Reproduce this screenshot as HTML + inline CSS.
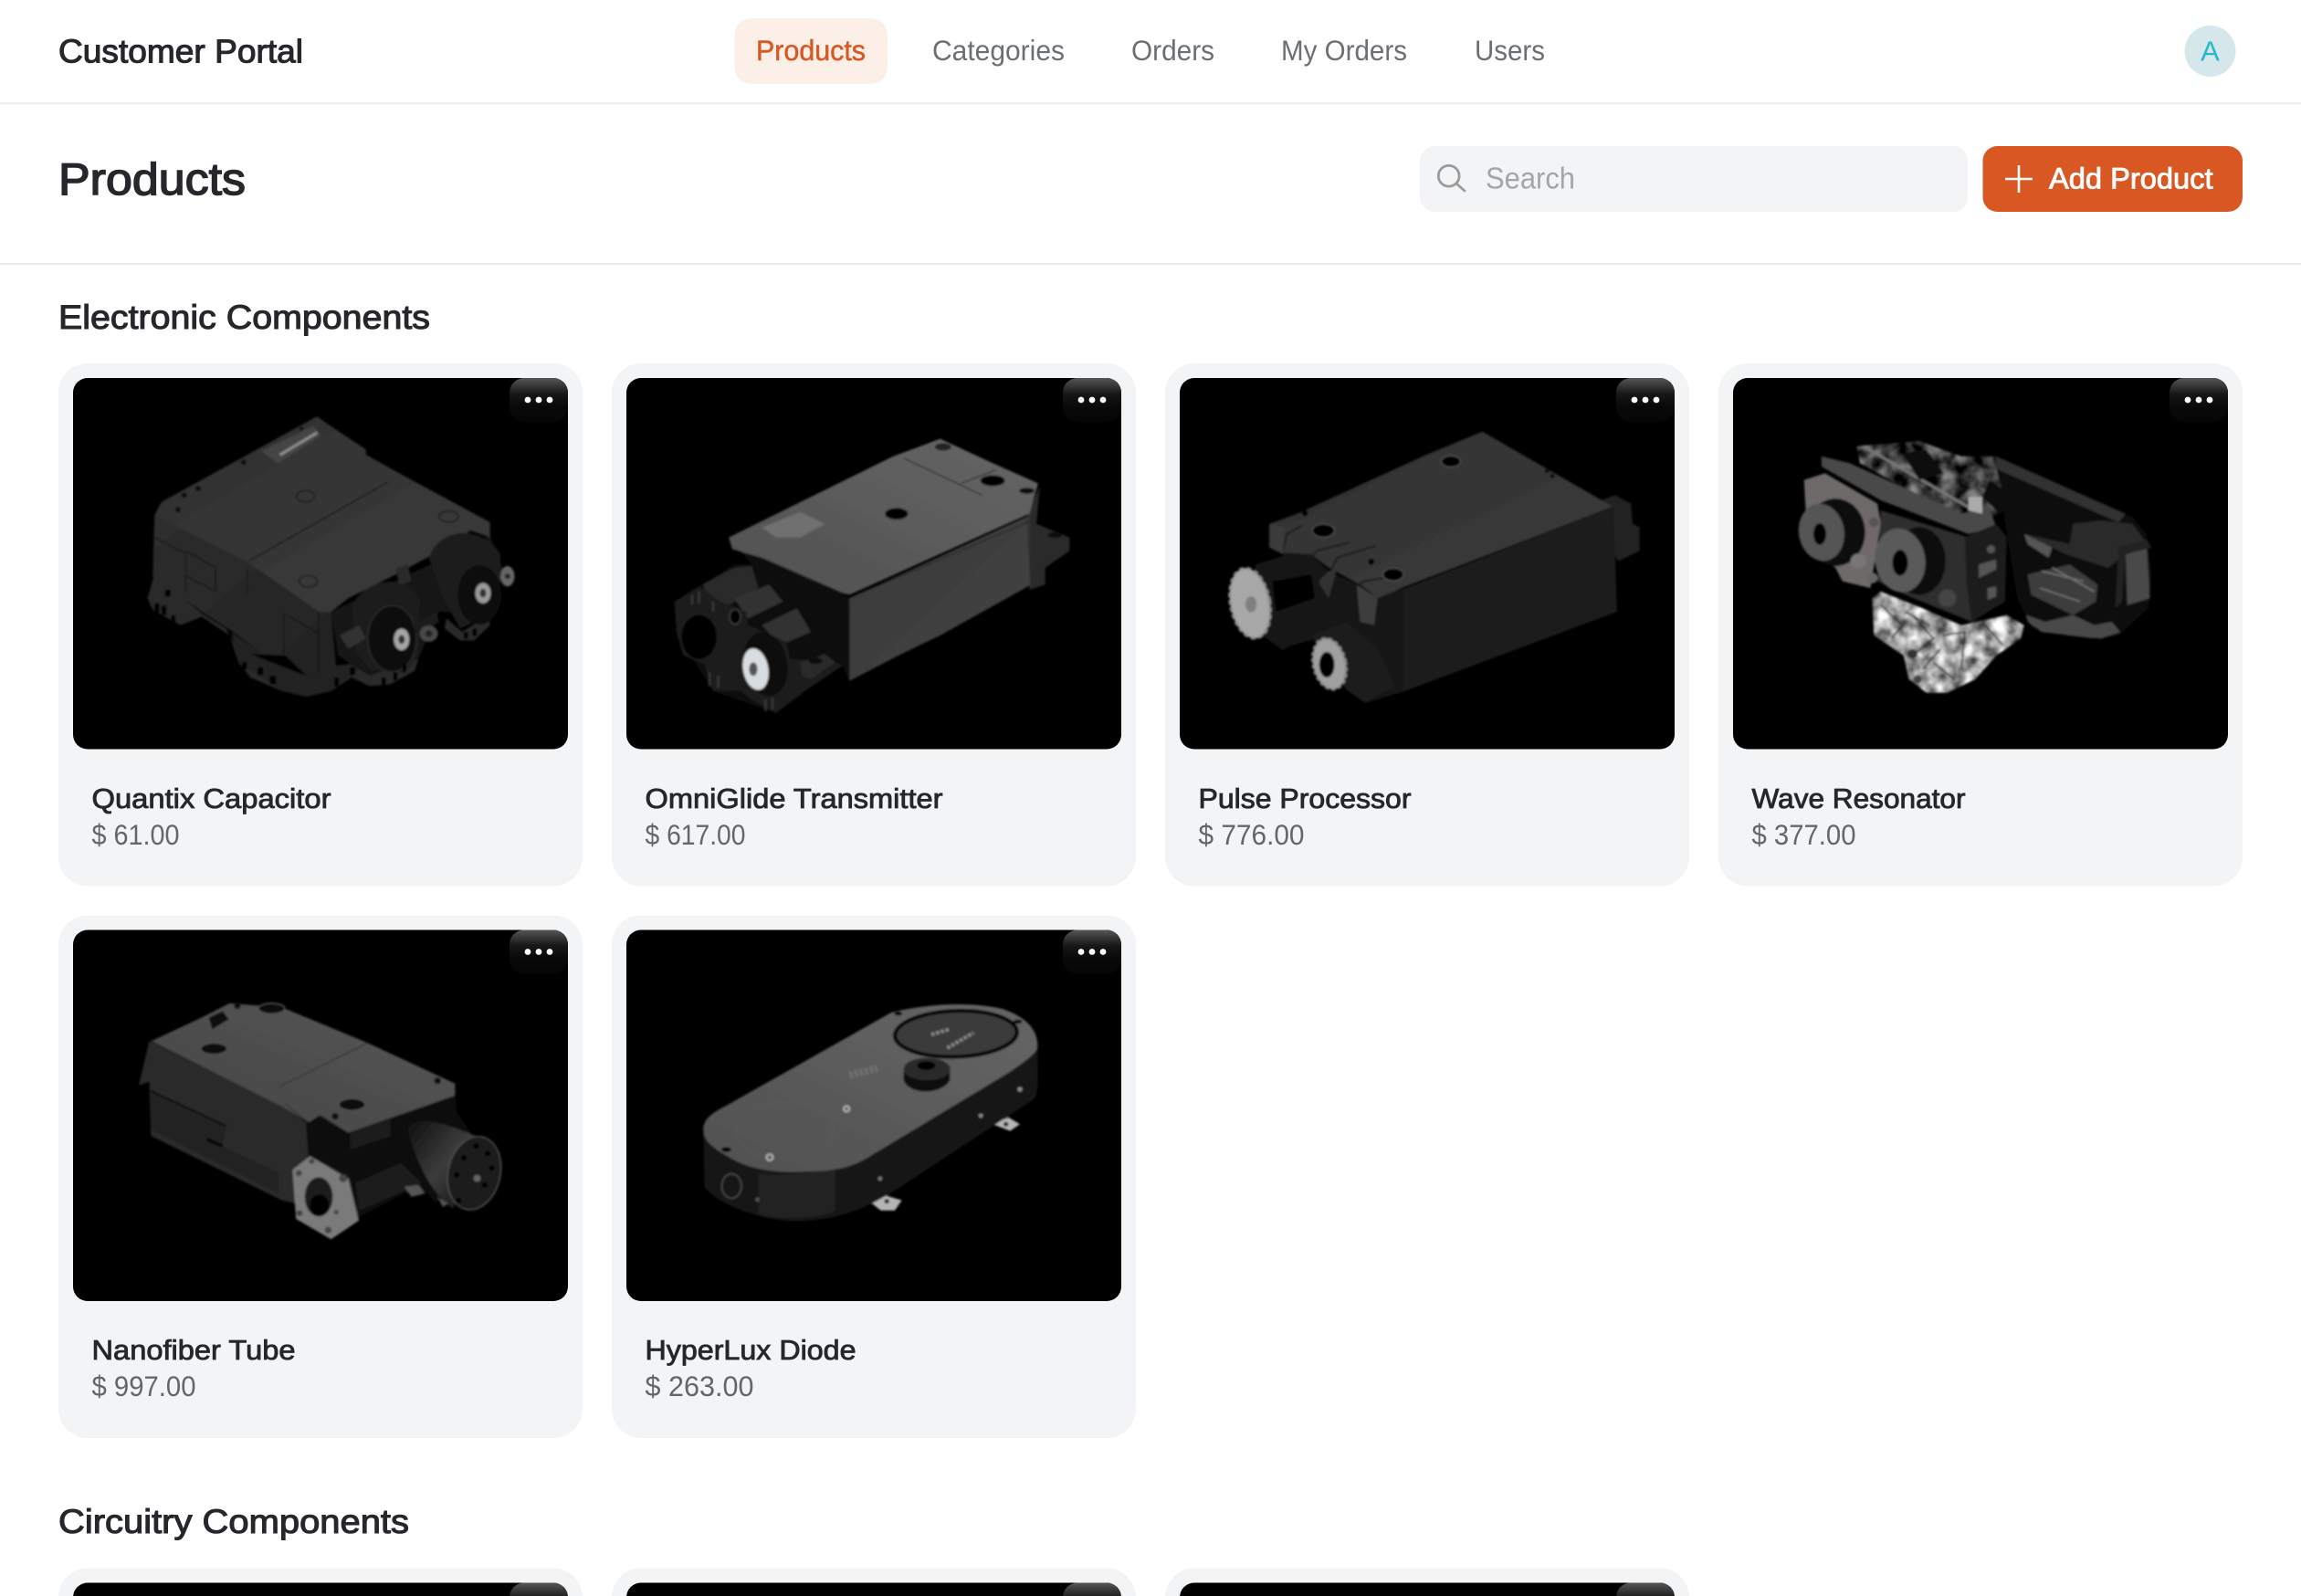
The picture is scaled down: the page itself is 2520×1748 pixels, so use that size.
<!DOCTYPE html>
<html lang="en"><head><meta charset="utf-8"><title>Customer Portal - Products</title>
<style>
html,body{margin:0;padding:0;background:#fff;width:2520px;height:1748px;overflow:hidden}
svg{display:block}
text{font-family:"Liberation Sans",Arial,sans-serif}
.n{font-size:30.5px;fill:#25272b;stroke:#25272b;stroke-width:.85px}
.p{font-size:31.5px;fill:#63676c}
.nav{font-size:31.5px;fill:#6b6f73}
.h2{font-size:37px;fill:#25272b;stroke:#25272b;stroke-width:1.1px}
</style></head><body>
<svg xmlns="http://www.w3.org/2000/svg" width="2520" height="1748" viewBox="0 0 2520 1748">
<defs>
<linearGradient id="top1" x1="0" y1="0" x2="1" y2="1"><stop offset="0" stop-color="#303030"/><stop offset="1" stop-color="#3c3c3c"/></linearGradient>
<linearGradient id="top2" x1="0" y1="1" x2="1" y2="0"><stop offset="0" stop-color="#505050"/><stop offset="1" stop-color="#666"/></linearGradient>
<linearGradient id="side" x1="0" y1="0" x2="1" y2="1"><stop offset="0" stop-color="#2e2e2e"/><stop offset="1" stop-color="#222"/></linearGradient>
<linearGradient id="side2" x1="0" y1="0" x2="1" y2="1"><stop offset="0" stop-color="#383838"/><stop offset="1" stop-color="#454545"/></linearGradient>
<linearGradient id="dotbg" x1="0" y1="0" x2="0" y2="1"><stop offset="0" stop-color="#565656"/><stop offset=".36" stop-color="#171717"/><stop offset=".65" stop-color="#090909"/><stop offset="1" stop-color="#060606"/></linearGradient>
<linearGradient id="cyl" x1="0" y1="0" x2="1" y2="1"><stop offset="0" stop-color="#0f0f0f"/><stop offset=".5" stop-color="#3c3c3c"/><stop offset="1" stop-color="#0a0a0a"/></linearGradient>
<filter id="b" x="-5%" y="-5%" width="110%" height="110%"><feGaussianBlur stdDeviation="2.6"/></filter>
<filter id="metal" x="0" y="0" width="100%" height="100%" color-interpolation-filters="sRGB"><feTurbulence type="fractalNoise" baseFrequency="0.024" numOctaves="3" seed="4"/><feColorMatrix values="1.5 0 0 0 -0.12 1.5 0 0 0 -0.12 1.5 0 0 0 -0.12 0 0 0 0 1"/><feComposite in2="SourceAlpha" operator="in"/></filter>
<filter id="mech" x="0" y="0" width="100%" height="100%" color-interpolation-filters="sRGB"><feTurbulence type="fractalNoise" baseFrequency="0.022" numOctaves="3" seed="9"/><feColorMatrix values="1.1 0 0 0 -0.3 1.1 0 0 0 -0.3 1.1 0 0 0 -0.3 0 0 0 0 1"/><feComposite in2="SourceAlpha" operator="in"/></filter>
<clipPath id="c1"><rect x="80" y="414" width="542" height="406.5" rx="16"/></clipPath>
<clipPath id="c2"><rect x="686" y="414" width="542" height="406.5" rx="16"/></clipPath>
<clipPath id="c3"><rect x="1292" y="414" width="542" height="406.5" rx="16"/></clipPath>
<clipPath id="c4"><rect x="1898" y="414" width="542" height="406.5" rx="16"/></clipPath>
<clipPath id="c5"><rect x="80" y="1018.5" width="542" height="406.5" rx="16"/></clipPath>
<clipPath id="c6"><rect x="686" y="1018.5" width="542" height="406.5" rx="16"/></clipPath>
</defs>
<rect width="2520" height="1748" fill="#fff"/>

<!-- nav -->
<rect x="0" y="112" width="2520" height="2" fill="#eceef0"/>
<rect x="0" y="114" width="2520" height="1" fill="#f7f8f9"/>
<text x="64" y="68.5" font-size="36.5" fill="#25272b" stroke="#25272b" stroke-width="1.1" textLength="268" lengthAdjust="spacingAndGlyphs">Customer Portal</text>
<rect x="804.5" y="20" width="167.5" height="72" rx="18" fill="#fbefe8"/>
<text x="828" y="66" class="nav" style="fill:#d95723;stroke:#d95723;stroke-width:.5px" textLength="120" lengthAdjust="spacingAndGlyphs">Products</text>
<text x="1021" y="66" class="nav" textLength="145" lengthAdjust="spacingAndGlyphs">Categories</text>
<text x="1239" y="66" class="nav" textLength="91" lengthAdjust="spacingAndGlyphs">Orders</text>
<text x="1403" y="66" class="nav" textLength="138" lengthAdjust="spacingAndGlyphs">My Orders</text>
<text x="1615" y="66" class="nav" textLength="77" lengthAdjust="spacingAndGlyphs">Users</text>
<circle cx="2420.5" cy="56" r="28" fill="#d5e7eb"/>
<text x="2420.5" y="66.5" font-size="31" fill="#22b8cf" text-anchor="middle">A</text>

<!-- page header -->
<rect x="0" y="288" width="2520" height="2" fill="#e9eaec"/>
<text x="64" y="213" font-size="49" fill="#25272b" stroke="#25272b" stroke-width="1.5" textLength="205" lengthAdjust="spacingAndGlyphs">Products</text>
<rect x="1555" y="160" width="600" height="72" rx="16" fill="#f3f4f6"/>
<circle cx="1586.7" cy="192.7" r="11.4" fill="none" stroke="#9b9b9b" stroke-width="2.8"/>
<path d="M1595 201 L1604 209" stroke="#9b9b9b" stroke-width="2.8" stroke-linecap="round"/>
<text x="1627" y="206.5" font-size="33" fill="#a3a6a9" textLength="98" lengthAdjust="spacingAndGlyphs">Search</text>
<rect x="2171.5" y="160" width="284.5" height="72" rx="16" fill="#d95723"/>
<path d="M2196 196 H2226 M2211 181 V211" stroke="#fff" stroke-width="2.6" fill="none"/>
<text x="2244" y="206.5" font-size="32" fill="#fff" stroke="#fff" stroke-width=".85" textLength="179.5" lengthAdjust="spacingAndGlyphs">Add Product</text>

<text x="64" y="360" class="h2" textLength="407" lengthAdjust="spacingAndGlyphs">Electronic Components</text>
<text x="64" y="1679" class="h2" textLength="384" lengthAdjust="spacingAndGlyphs">Circuitry Components</text>

<!-- cards row 1 -->
<rect x="64" y="398" width="574" height="572.5" rx="32" fill="#f3f4f6"/>
<rect x="670" y="398" width="574" height="572.5" rx="32" fill="#f3f4f6"/>
<rect x="1276" y="398" width="574" height="572.5" rx="32" fill="#f3f4f6"/>
<rect x="1882" y="398" width="574" height="572.5" rx="32" fill="#f3f4f6"/>
<!-- cards row 2 -->
<rect x="64" y="1002.5" width="574" height="572.5" rx="32" fill="#f3f4f6"/>
<rect x="670" y="1002.5" width="574" height="572.5" rx="32" fill="#f3f4f6"/>
<!-- cards row 3 -->
<rect x="64" y="1717.5" width="574" height="80" rx="32" fill="#f3f4f6"/>
<rect x="670" y="1717.5" width="574" height="80" rx="32" fill="#f3f4f6"/>
<rect x="1276" y="1717.5" width="574" height="80" rx="32" fill="#f3f4f6"/>
<rect x="80" y="1733.5" width="542" height="60" rx="16" fill="#000"/>
<rect x="686" y="1733.5" width="542" height="60" rx="16" fill="#000"/>
<rect x="1292" y="1733.5" width="542" height="60" rx="16" fill="#000"/>
<rect x="558" y="1733.5" width="64" height="48" rx="16" fill="url(#dotbg)"/>
<rect x="1164" y="1733.5" width="64" height="48" rx="16" fill="url(#dotbg)"/>
<rect x="1770" y="1733.5" width="64" height="48" rx="16" fill="url(#dotbg)"/>

<!-- image 1 -->
<g clip-path="url(#c1)"><rect x="80" y="414" width="542" height="407" fill="#000"/>
<svg x="80" y="414" width="542" height="406.5" viewBox="52 38 1416 1099" preserveAspectRatio="none"><g filter="url(#b)">
<path d="M265 690 L285 620 L420 735 L490 780 L530 860 L640 920 L720 950 L830 905 L870 880 L905 905 L1010 850 L1040 870 L1030 905 L960 945 L900 950 L850 925 L790 965 L720 982 L650 965 L560 925 L525 880 L500 800 L420 745 L360 770 L280 725 Z" fill="#2c2c2c"/>
<path d="M505 790 L525 880 L650 965 L720 982 L790 965 L850 925 L880 880 L800 890 L755 920 L600 860 Z" fill="#232323"/>
<path d="M1120 750 L1165 790 L1240 740 L1245 770 L1200 815 L1160 815 L1115 780 Z" fill="#2c2c2c"/>
<path d="M790 730 L1245 505 L1280 600 L1240 740 L1100 730 L1040 870 L900 920 L810 860 Z" fill="#131313"/>
<path d="M285 445 L555 585 L755 730 L790 730 L805 895 L755 920 L600 860 L510 790 L480 770 L420 730 L280 625 Z" fill="url(#side)"/>
<path d="M305 405 L750 152 L775 170 L890 250 L890 265 L985 320 L1245 465 L1245 510 L1190 490 L1065 570 L975 620 L840 690 L790 730 L755 730 L555 585 L285 445 Z" fill="url(#top1)"/>
<path d="M590 255 L740 180 L760 210 L640 290 Z" fill="#454545"/>
<path d="M645 265 L750 200" stroke="#aaa" stroke-width="8" stroke-dasharray="5 3"/>
<path d="M555 580 L955 345 M550 600 V680 M375 550 V670 M375 550 L460 600 V670 L375 625 M285 510 L370 555 M655 735 V860 M655 735 L755 795 M755 730 V910" stroke="#111" stroke-width="3" fill="none"/>
<circle cx="540" cy="287" r="8" fill="#111"/><circle cx="410" cy="365" r="8" fill="#111"/><circle cx="370" cy="385" r="8" fill="#111"/><circle cx="352" cy="428" r="8" fill="#111"/><circle cx="705" cy="188" r="6" fill="#111"/>
<ellipse cx="718" cy="388" rx="26" ry="17" fill="none" stroke="#1a1a1a" stroke-width="4"/><ellipse cx="1127" cy="448" rx="28" ry="16" fill="none" stroke="#1a1a1a" stroke-width="4"/><ellipse cx="725" cy="640" rx="26" ry="17" fill="none" stroke="#1a1a1a" stroke-width="4"/>
<path d="M1070 570 C1100 480 1220 470 1275 560 L1275 640 L1240 740 L1160 780 L1110 690 Z" fill="#1a1a1a"/>
<ellipse cx="1215" cy="680" rx="62" ry="88" fill="#0d0d0d"/><ellipse cx="1225" cy="675" rx="22" ry="30" fill="#9a9a9a"/><ellipse cx="1225" cy="675" rx="9" ry="13" fill="#333"/>
<ellipse cx="1295" cy="625" rx="20" ry="30" fill="#666"/><circle cx="1295" cy="625" r="8" fill="#222"/>
<path d="M850 710 C900 620 1020 620 1045 700 L1040 860 L1000 910 L905 905 L860 850 Z" fill="#1a1a1a"/>
<ellipse cx="965" cy="810" rx="70" ry="98" fill="#0a0a0a" stroke="#262626" stroke-width="6"/><ellipse cx="992" cy="812" rx="22" ry="32" fill="#a5a5a5"/><ellipse cx="992" cy="812" rx="9" ry="13" fill="#333"/>
<path d="M1020 770 L1090 730 L1100 760 L1040 800 Z" fill="#1a1a1a"/><ellipse cx="1070" cy="795" rx="26" ry="24" fill="#4a4a4a"/><circle cx="1070" cy="795" r="10" fill="#222"/>
<path d="M975 600 L1010 590 L1020 640 L985 650 Z" fill="#2a2a2a"/><path d="M815 800 L870 770 L890 810 L840 840 Z" fill="#333"/>
<g fill="#000"><rect x="285" y="705" width="14" height="28"/><rect x="305" y="712" width="14" height="28"/><rect x="333" y="740" width="12" height="24"/><rect x="315" y="665" width="16" height="20"/><rect x="535" y="880" width="14" height="22"/><rect x="580" y="895" width="16" height="22"/><rect x="615" y="920" width="18" height="25"/><rect x="800" y="925" width="12" height="26"/><rect x="845" y="895" width="14" height="22"/><rect x="935" y="925" width="12" height="22"/><rect x="968" y="910" width="12" height="24"/><rect x="995" y="885" width="10" height="24"/><rect x="1170" y="790" width="12" height="20"/><rect x="1195" y="780" width="12" height="22"/><path d="M560 855 L660 860 L720 920 L620 880 Z"/></g>
</g></svg></g>

<!-- image 2 -->
<g clip-path="url(#c2)"><rect x="686" y="414" width="542" height="407" fill="#000"/>
<svg x="686" y="414" width="542" height="406.5" viewBox="42 38 1416 1099" preserveAspectRatio="none"><g filter="url(#b)">
<path d="M1190 440 L1225 360 L1215 470 L1310 510 L1310 550 L1240 600 L1240 650 L1195 665 Z" fill="#2a2a2a"/>
<path d="M350 590 L400 590 L335 510 L430 570 L680 690 L680 935 L660 890 L560 960 L470 1030 L290 965 L185 790 L180 700 L250 655 Z" fill="#0f0f0f"/>
<path d="M680 690 L1195 445 L1200 650 L1010 760 L940 800 L820 860 L680 935 Z" fill="url(#side2)"/>
<path d="M335 510 L805 270 L940 218 L1090 290 L1220 350 L1195 440 L680 680 L660 675 L430 570 L345 545 Z" fill="url(#top2)"/>
<path d="M835 275 L1060 385 M1000 350 L1100 310 M680 690 V930 M1190 450 L1200 650 M700 680 L1190 465" stroke="#222" stroke-width="3" fill="none"/>
<ellipse cx="815" cy="440" rx="33" ry="17" fill="#000"/><ellipse cx="1090" cy="342" rx="35" ry="16" fill="#000"/><ellipse cx="948" cy="242" rx="24" ry="11" fill="#222"/><ellipse cx="1188" cy="372" rx="22" ry="9" fill="#111"/><ellipse cx="1268" cy="503" rx="20" ry="9" fill="#111"/>
<path d="M430 480 L540 435 L610 470 L540 510 L470 510 Z" fill="#7a7a7a" opacity=".7"/>
<path d="M260 650 L350 600 L400 595 L420 660 L300 730 Z" fill="#2a2a2a"/>
<path d="M350 690 L450 650 L490 700 L390 750 Z" fill="#333"/><path d="M430 770 L530 720 L570 790 L480 830 Z" fill="#303030"/>
<path d="M180 700 L250 655 L310 700 L385 730 L390 770 L500 820 L510 870 L640 880 L660 890 L560 960 L470 1030 L400 990 L370 965 L290 965 L265 885 L205 860 L185 790 Z" fill="#1c1c1c"/>
<ellipse cx="250" cy="805" rx="50" ry="65" fill="#050505"/><ellipse cx="235" cy="800" rx="25" ry="45" fill="#000"/>
<ellipse cx="440" cy="885" rx="62" ry="95" fill="#0d0d0d" transform="rotate(-10 440 885)"/><ellipse cx="412" cy="900" rx="36" ry="62" fill="#d8dde0" transform="rotate(-10 412 900)"/><ellipse cx="405" cy="900" rx="12" ry="20" fill="#555"/>
<ellipse cx="353" cy="745" rx="16" ry="22" fill="#000" stroke="#444" stroke-width="3"/>
<path d="M540 880 L610 855 L640 880 L570 930 L545 920 Z" fill="#2a2a2a"/><ellipse cx="583" cy="875" rx="20" ry="10" fill="#111"/>
<g stroke="#3c3c3c" stroke-width="5"><path d="M230 680 V710 M250 670 V705 M290 700 V730 M280 910 V950 M305 920 V955 M440 990 V1025 M460 985 V1020"/></g>
</g></svg></g>

<!-- image 3 -->
<g clip-path="url(#c3)"><rect x="1292" y="414" width="542" height="407" fill="#000"/>
<svg x="1292" y="414" width="542" height="406.5" viewBox="44 38 1416 1099" preserveAspectRatio="none"><g filter="url(#b)">
<path d="M1250 400 L1290 385 L1335 410 L1340 470 L1360 480 L1360 550 L1300 580 L1285 560 Z" fill="#222"/>
<path d="M290 580 L600 680 L680 665 L680 968 L575 1000 L520 960 L470 800 L330 840 L290 700 Z" fill="#141414"/>
<path d="M680 665 L1285 420 L1295 730 L680 968 Z" fill="#1e1e1e"/>
<path d="M300 470 L380 440 L750 265 L910 197 L1285 420 L680 660 L610 690 L560 650 L470 600 L420 560 L340 555 L300 530 Z" fill="url(#top1)"/>
<path d="M340 555 L420 560 L470 610 L555 650 L610 690 L680 665 L680 830 L610 850 L610 960 L575 1000 L530 960 L470 790 L440 620 L340 590 Z" fill="#171717"/>
<path d="M340 550 L350 500 L395 475 M420 570 L435 550 L530 525 M475 610 L495 570 L605 535 M550 660 L570 640 L680 620" stroke="#111" stroke-width="4" fill="none"/>
<path d="M300 470 L345 480 L340 560 L300 540 Z" fill="#3a3a3a"/><path d="M550 650 L610 690 L600 770 L560 760 Z" fill="#3d3d3d"/><path d="M470 610 L495 600 L470 690 L440 640 Z" fill="#333"/>
<path d="M680 665 V965 M680 660 L1285 420" stroke="#0a0a0a" stroke-width="3" fill="none"/>
<ellipse cx="820" cy="285" rx="28" ry="17" fill="#000" stroke="#555" stroke-width="3"/><ellipse cx="455" cy="490" rx="32" ry="20" fill="#000" stroke="#555" stroke-width="3"/><ellipse cx="655" cy="620" rx="30" ry="19" fill="#000" stroke="#555" stroke-width="3"/><circle cx="402" cy="438" r="9" fill="#000"/><circle cx="592" cy="582" r="9" fill="#000"/><circle cx="1095" cy="313" r="7" fill="#111"/><circle cx="1110" cy="328" r="7" fill="#111"/>
<path d="M260 590 L340 565 L440 620 L460 730 L400 800 L340 845 L280 800 L260 720 Z" fill="#131313"/>
<path d="M310 640 L420 620 L430 690 L320 730 Z" fill="#050505"/>
<ellipse cx="245" cy="705" rx="56" ry="105" fill="#a8a8a8" stroke="#8f8f8f" stroke-width="8" stroke-dasharray="14 8" transform="rotate(-10 245 705)"/><ellipse cx="248" cy="708" rx="16" ry="24" fill="#808080"/>
<path d="M420 800 L520 760 L610 840 L660 950 L575 1000 L520 960 Z" fill="#1f1f1f"/>
<ellipse cx="472" cy="885" rx="46" ry="76" fill="#a0a0a0" stroke="#8f8f8f" stroke-width="8" stroke-dasharray="12 7" transform="rotate(-12 472 885)"/><ellipse cx="465" cy="887" rx="22" ry="38" fill="#050505"/>
</g></svg></g>

<!-- image 4 -->
<g clip-path="url(#c4)"><rect x="1898" y="414" width="542" height="407" fill="#000"/>
<svg x="1898" y="414" width="542" height="406.5" viewBox="47 38 1416 1099" preserveAspectRatio="none"><g filter="url(#b)">
<path d="M790 265 L1190 450 L1230 500 L1245 620 L1235 720 L1150 800 L1070 810 L1000 800 L900 775 L860 690 L800 300 Z" fill="#111"/>
<path d="M800 270 L1170 440 L1150 465 L795 305 Z" fill="#333"/>
<path d="M880 500 L1010 530 L1020 470 L1100 460 L1190 470 L1225 520 L1170 560 L1120 600 L1000 560 Z" fill="#2a2a2a"/>
<path d="M1170 560 L1230 530 L1240 690 L1175 710 Z" fill="#4a4a4a"/><path d="M1150 540 L1230 515 L1245 540 L1170 560 L1160 700 L1140 720 Z" fill="#222"/>
<path d="M890 620 L1010 590 L1090 650 L1085 700 L1020 740 L900 680 Z" fill="#3c3c3c"/><path d="M930 610 L1050 640 M925 660 L1040 700 M960 600 L1080 670" stroke="#777" stroke-width="4"/>
<path d="M885 740 L940 760 L1020 740 L1080 770 L1130 760 L1155 790 L1100 810 L1010 800 L930 790 L890 760 Z" fill="#4a4a4a"/>
<path d="M880 500 L960 540 L950 570 L890 530 Z" fill="#555"/>
<path d="M400 240 L580 225 L700 270 L790 270 L830 420 L760 470 L600 400 L410 290 Z" fill="#3a3a3a" filter="url(#mech)"/>
<path d="M300 270 L380 290 L700 440 L780 420 L800 480 L720 500 L470 400 L300 300 Z" fill="#4a4a4a"/>
<path d="M420 240 L720 420" stroke="#777" stroke-width="8"/><path d="M530 260 L600 250 L650 320 L580 340 Z" fill="#111"/><path d="M780 340 L860 400 L810 440 L760 390 Z" fill="#0d0d0d"/><path d="M720 390 L760 390 L760 440 L720 430 Z" fill="#aaa"/>
<path d="M250 340 L310 320 L460 410 L470 470 L440 660 L360 640 L340 600 L260 530 Z" fill="#6e6a69"/>
<ellipse cx="340" cy="495" rx="85" ry="100" fill="#0b0b0b"/>
<ellipse cx="300" cy="495" rx="65" ry="85" fill="#555" transform="rotate(-8 300 495)"/><ellipse cx="295" cy="500" rx="18" ry="32" fill="#000"/>
<path d="M470 430 L720 510 L730 760 L540 680 L460 640 Z" fill="#2f2f2f"/>
<ellipse cx="580" cy="580" rx="75" ry="100" fill="#0b0b0b"/>
<ellipse cx="525" cy="578" rx="72" ry="95" fill="#5a5a5a" transform="rotate(-8 525 578)"/><ellipse cx="525" cy="585" rx="22" ry="38" fill="#000"/>
<path d="M710 510 L800 470 L830 510 L825 700 L730 760 L715 650 Z" fill="#1c1c1c"/><path d="M750 590 L800 575 L800 605 L750 630 Z" fill="#555"/><circle cx="785" cy="545" r="12" fill="#555"/><path d="M775 660 L800 655 L800 685 L775 695 Z" fill="#555"/>
<circle cx="405" cy="580" r="22" fill="#777"/><circle cx="660" cy="690" r="26" fill="#444"/><circle cx="445" cy="630" r="16" fill="#666"/><circle cx="450" cy="465" r="14" fill="#555"/>
<path d="M445 690 L470 670 L590 720 L700 770 L830 740 L880 770 L870 810 L800 860 L740 930 L660 970 L600 970 L550 930 L535 860 L450 800 Z" fill="#9a9a9a" filter="url(#metal)"/>
<path d="M470 710 L530 770 L500 810 M560 740 L620 810 L560 860 M650 800 L710 790 L700 900 M760 760 L820 830 M620 880 L680 930 M540 730 L610 770 M590 900 L640 840" stroke="#2a2a2a" stroke-width="4" fill="none"/>
<circle cx="560" cy="855" r="14" fill="#333"/><circle cx="575" cy="930" r="12" fill="#444"/>
</g></svg></g>

<!-- image 5 -->
<g clip-path="url(#c5)"><rect x="80" y="1018.5" width="542" height="407" fill="#000"/>
<svg x="80" y="1018.5" width="542" height="406.5" viewBox="52 51 1416 1097" preserveAspectRatio="none"><g filter="url(#b)">
<path d="M240 510 L270 500 L275 660 L650 850 L690 860 L725 720 L720 620 L645 570 L270 380 Z" fill="#2b2b2b"/>
<path d="M275 530 L490 630 L480 690 L640 770 L640 830 L275 640 Z" fill="#232323"/><path d="M270 525 L490 630" stroke="#0a0a0a" stroke-width="5"/><path d="M435 670 L480 690" stroke="#000" stroke-width="9"/>
<path d="M275 380 L420 310 L500 268 L650 280 L895 385 L1145 505 L1145 540 L840 650 L760 600 L725 620 L645 570 Z" fill="url(#top2)" opacity=".85"/>
<path d="M640 515 L895 385 M660 565 L725 620" stroke="#2a2a2a" stroke-width="3"/>
<path d="M440 310 L480 290 L498 315 L450 345 Z" fill="#111"/><circle cx="522" cy="275" r="10" fill="#111"/><ellipse cx="620" cy="283" rx="38" ry="16" fill="#111" stroke="#555" stroke-width="3"/><ellipse cx="455" cy="402" rx="38" ry="17" fill="#111" stroke="#555" stroke-width="3"/><ellipse cx="850" cy="567" rx="38" ry="18" fill="#111" stroke="#555" stroke-width="3"/><circle cx="1095" cy="497" r="10" fill="#111"/><circle cx="802" cy="602" r="10" fill="#111"/>
<path d="M725 620 L755 600 L840 650 L1145 540 L1150 590 L1190 650 L1090 860 L1060 820 L1000 830 L870 900 L840 780 L725 720 Z" fill="#101010"/>
<path d="M845 650 L960 610 L960 660 L845 700 Z" fill="#1e1e1e"/><path d="M860 800 L990 740 L1050 800 L870 880 Z" fill="#1f1f1f"/>
<path d="M1010 640 C1030 600 1090 610 1215 665 L1140 875 C1100 850 1040 770 1010 640 Z" fill="url(#cyl)"/>
<ellipse cx="1200" cy="770" rx="75" ry="110" fill="#1e1e1e" stroke="#555" stroke-width="3" transform="rotate(12 1200 770)"/>
<g fill="#000"><circle cx="1238" cy="712" r="8"/><circle cx="1205" cy="690" r="8"/><circle cx="1170" cy="725" r="8"/><circle cx="1150" cy="775" r="8"/><circle cx="1155" cy="850" r="8"/><circle cx="1250" cy="755" r="8"/><circle cx="1230" cy="805" r="8"/></g><circle cx="1208" cy="785" r="10" fill="#666"/>
<path d="M1000 810 L1040 805 L1060 830 L1020 840 Z M1095 840 L1125 860 L1110 870 Z" fill="#555"/>
<path d="M680 760 L730 720 L840 785 L870 910 L790 965 L690 905 Z" fill="#7a7a7a"/>
<ellipse cx="755" cy="840" rx="40" ry="58" fill="#1a1a1a"/><ellipse cx="757" cy="865" rx="27" ry="32" fill="#000"/>
<g fill="#444"><circle cx="735" cy="735" r="8"/><circle cx="698" cy="770" r="9"/><circle cx="825" cy="785" r="12"/><circle cx="700" cy="888" r="9"/><circle cx="782" cy="938" r="10"/><circle cx="805" cy="885" r="7"/></g>
</g></svg></g>

<!-- image 6 -->
<g clip-path="url(#c6)"><rect x="686" y="1018.5" width="542" height="407" fill="#000"/>
<svg x="686" y="1018.5" width="542" height="406.5" viewBox="42 51 1416 1097" preserveAspectRatio="none"><g filter="url(#b)">
<path d="M745 860 L780 835 L830 850 L810 880 L770 880 Z M1090 625 L1135 605 L1168 625 L1140 645 Z" fill="#b5b5b5"/>
<circle cx="787" cy="853" r="7" fill="#222"/><circle cx="1128" cy="625" r="7" fill="#222"/>
<path d="M262 650 L265 810 C300 860 420 910 530 912 C640 910 720 880 820 815 L1210 550 C1222 530 1220 480 1218 400 Z" fill="#191919"/>
<path d="M420 770 C480 780 560 770 640 760 L640 880 C600 905 470 910 420 890 Z" fill="#222"/>
<path d="M262 640 C262 610 290 590 325 572 L800 295 C920 265 1040 265 1120 285 C1190 310 1222 350 1218 400 C1210 420 1180 440 1140 470 L730 725 C690 750 640 765 560 765 C480 770 400 762 340 725 C300 700 262 680 262 640 Z" fill="url(#top2)"/>
<ellipse cx="985" cy="358" rx="175" ry="68" fill="#3a3a3a" stroke="#000" stroke-width="11" transform="rotate(-2 985 358)"/>
<path d="M915 360 L965 345 M960 400 L1035 355" stroke="#8a8a8a" stroke-width="10" stroke-dasharray="9 5"/>
<path d="M680 480 L760 460" stroke="#6f6f6f" stroke-width="22" stroke-dasharray="10 5"/>
<path d="M835 470 L835 495 C850 540 945 540 968 495 L968 470 Z" fill="#111"/><ellipse cx="902" cy="462" rx="67" ry="33" fill="#2c2c2c"/><ellipse cx="900" cy="452" rx="26" ry="13" fill="#000"/>
<ellipse cx="495" cy="645" rx="140" ry="85" fill="none" stroke="#5d5d5d" stroke-width="2"/>
<circle cx="672" cy="580" r="11" fill="#aaa"/><circle cx="672" cy="580" r="4" fill="#333"/><circle cx="452" cy="723" r="12" fill="#aaa"/><circle cx="452" cy="723" r="5" fill="#333"/>
<ellipse cx="328" cy="700" rx="14" ry="7" fill="#000"/><ellipse cx="820" cy="298" rx="12" ry="6" fill="#000"/><ellipse cx="1162" cy="322" rx="13" ry="6" fill="#000"/>
<ellipse cx="343" cy="808" rx="28" ry="36" fill="none" stroke="#555" stroke-width="3"/>
<circle cx="417" cy="848" r="6" fill="#555"/><circle cx="768" cy="786" r="6" fill="#777"/><circle cx="1056" cy="600" r="6" fill="#888"/><circle cx="1168" cy="522" r="7" fill="#888"/>
</g></svg></g>

<!-- dots buttons -->
<g>
<rect x="558" y="414" width="64" height="48" rx="16" fill="url(#dotbg)"/><rect x="1164" y="414" width="64" height="48" rx="16" fill="url(#dotbg)"/><rect x="1770" y="414" width="64" height="48" rx="16" fill="url(#dotbg)"/><rect x="2376" y="414" width="64" height="48" rx="16" fill="url(#dotbg)"/>
<rect x="558" y="1018.5" width="64" height="48" rx="16" fill="url(#dotbg)"/><rect x="1164" y="1018.5" width="64" height="48" rx="16" fill="url(#dotbg)"/>
</g>
<g fill="#fff">
<circle cx="578" cy="438" r="3.4"/><circle cx="590" cy="438" r="3.4"/><circle cx="602" cy="438" r="3.4"/>
<circle cx="1184" cy="438" r="3.4"/><circle cx="1196" cy="438" r="3.4"/><circle cx="1208" cy="438" r="3.4"/>
<circle cx="1790" cy="438" r="3.4"/><circle cx="1802" cy="438" r="3.4"/><circle cx="1814" cy="438" r="3.4"/>
<circle cx="2396" cy="438" r="3.4"/><circle cx="2408" cy="438" r="3.4"/><circle cx="2420" cy="438" r="3.4"/>
<circle cx="578" cy="1042.5" r="3.4"/><circle cx="590" cy="1042.5" r="3.4"/><circle cx="602" cy="1042.5" r="3.4"/>
<circle cx="1184" cy="1042.5" r="3.4"/><circle cx="1196" cy="1042.5" r="3.4"/><circle cx="1208" cy="1042.5" r="3.4"/>
</g>

<!-- card text -->
<text x="100.5" y="885" class="n" textLength="262" lengthAdjust="spacingAndGlyphs">Quantix Capacitor</text>
<text x="100.5" y="925" class="p" textLength="96" lengthAdjust="spacingAndGlyphs">$ 61.00</text>
<text x="706.5" y="885" class="n" textLength="326" lengthAdjust="spacingAndGlyphs">OmniGlide Transmitter</text>
<text x="706.5" y="925" class="p" textLength="110" lengthAdjust="spacingAndGlyphs">$ 617.00</text>
<text x="1312.5" y="885" class="n" textLength="233" lengthAdjust="spacingAndGlyphs">Pulse Processor</text>
<text x="1312.5" y="925" class="p" textLength="116" lengthAdjust="spacingAndGlyphs">$ 776.00</text>
<text x="1918.5" y="885" class="n" textLength="234" lengthAdjust="spacingAndGlyphs">Wave Resonator</text>
<text x="1918.5" y="925" class="p" textLength="114" lengthAdjust="spacingAndGlyphs">$ 377.00</text>
<text x="100.5" y="1489" class="n" textLength="223" lengthAdjust="spacingAndGlyphs">Nanofiber Tube</text>
<text x="100.5" y="1529" class="p" textLength="114" lengthAdjust="spacingAndGlyphs">$ 997.00</text>
<text x="706.5" y="1489" class="n" textLength="231" lengthAdjust="spacingAndGlyphs">HyperLux Diode</text>
<text x="706.5" y="1529" class="p" textLength="119" lengthAdjust="spacingAndGlyphs">$ 263.00</text>
</svg>
</body></html>
